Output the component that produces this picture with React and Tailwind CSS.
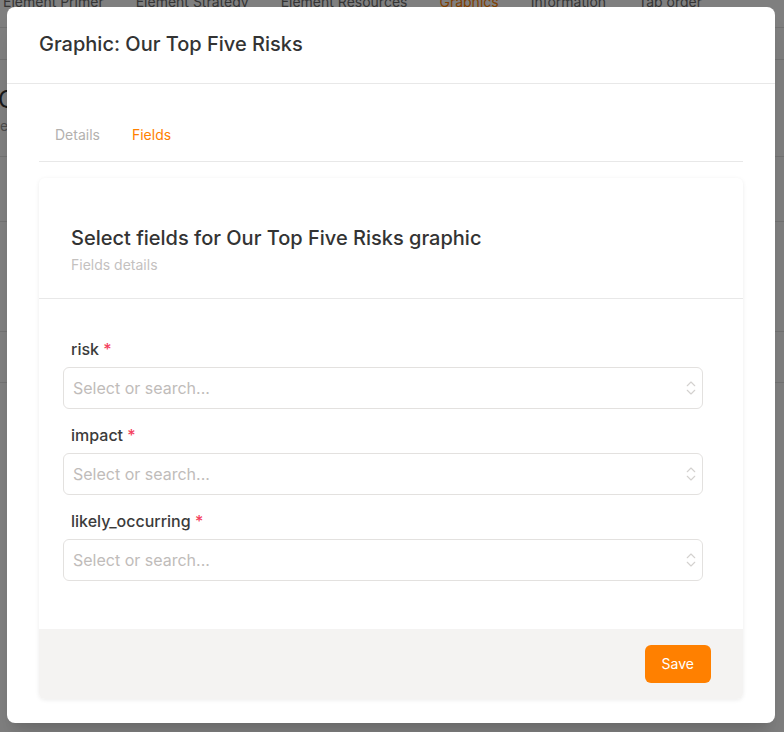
import React from 'react';
import { ChevronsUpDown } from 'lucide-react';

const bgTabs = ['Element Primer', 'Element Strategy', 'Element Resources', 'Graphics', 'Information', 'Tab order'];

const fields = ['risk', 'impact', 'likely_occurring'];

function SelectField({ label }) {
  return (
    <div className="flex flex-col">
      <label className="px-2 text-base leading-6 font-medium text-[#3b3b3b]">
        {label} <span className="text-[#f43f5e]">*</span>
      </label>
      <div className="mt-1.5 flex h-[42px] items-center justify-between rounded-md border border-[#e3e1df] bg-white pl-[9px] pr-[2px]">
        <span className="text-base text-[#bfbcba]">Select or search...</span>
        <ChevronsUpDown size={18} strokeWidth={1.5} className="text-[#d3d1cf]" />
      </div>
    </div>
  );
}

function App() {
  return (
    <div className="relative h-[732px] w-full overflow-hidden bg-white font-['Inter',sans-serif]">
      {/* page behind the modal */}
      <div>
        <nav className="-mt-[8px] flex h-[36px] items-start gap-8 border-b border-[#e5e5e5] pl-[3px] text-sm leading-5 whitespace-nowrap text-[#6b6b6b]">
          {bgTabs.map(t => (
            <span key={t} className={'shrink-0 ' + (t === 'Graphics' ? 'text-[#ff8000]' : '')}>
              {t}
            </span>
          ))}
        </nav>
        <div className="h-[32px] border-b border-[#e5e5e5]" />
        <div className="h-[97px] border-b border-[#e5e5e5] pt-[24px]">
          <div className="-ml-[2px] text-2xl text-[#333]">O</div>
          <div className="text-sm text-[#999]">e</div>
        </div>
        <div className="h-[65px] border-b border-[#e5e5e5]" />
        <div className="h-[110px] border-b border-[#e5e5e5]" />
        <div className="h-[51px] border-b border-[#e5e5e5]" />
      </div>

      {/* overlay + modal */}
      <div className="absolute inset-0 bg-black/50">
        <div className="ml-[7px] mt-[7px] w-[768px] rounded-lg bg-white pb-6 shadow-xl">
          <div className="border-b border-[#e8e8e8] px-8 pt-[23px] pb-[25px]">
            <h2 className="text-xl leading-7 font-medium text-[#333]">Graphic: Our Top Five Risks</h2>
          </div>

          <div className="px-8 pt-[25px]">
            <div className="flex border-b border-[#e8e8e8] text-sm">
              <button className="px-4 py-4 leading-5 text-[#b3b1af]">Details</button>
              <button className="px-4 py-4 leading-5 text-[#ff8000]">Fields</button>
            </div>

            <div className="mt-4 overflow-hidden rounded-md bg-white shadow-[0_1px_4px_rgba(0,0,0,0.08)]">
              <div className="border-b border-[#e8e8e8] px-8 pt-[46px] pb-[23px]">
                <h3 className="text-xl leading-7 font-medium text-[#333]">Select fields for Our Top Five Risks graphic</h3>
                <p className="mt-[3px] text-sm leading-5 text-[#c4c1bf]">Fields details</p>
              </div>

              <div className="flex flex-col gap-[14px] pt-[38px] pb-[48px] pl-6 pr-10">
                {fields.map(f => (
                  <SelectField key={f} label={f} />
                ))}
              </div>

              <div className="flex justify-end bg-[#f4f3f2] px-8 py-4">
                <button className="rounded-md bg-[#ff8000] px-[17px] py-[9px] text-sm leading-5 text-white">Save</button>
              </div>
            </div>
          </div>
        </div>
      </div>
    </div>
  );
}

export default App;
